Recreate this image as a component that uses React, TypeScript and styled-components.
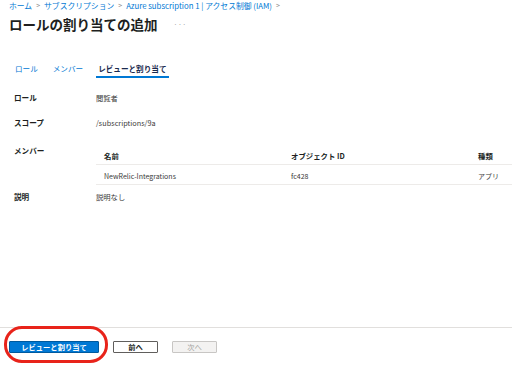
import React from "react";
import styled, { createGlobalStyle } from "styled-components";

const Global = createGlobalStyle`
  html, body { margin: 0; padding: 0; background: #ffffff; }
  body {
    font-family: "Noto Sans CJK JP", "Noto Sans", "Liberation Sans", sans-serif;
    color: #323130;
  }
  * { box-sizing: border-box; }
`;

const Page = styled.div`
  display: flex;
  flex-direction: column;
  height: 365px;
  width: 512px;
  overflow: hidden;
`;

const Main = styled.div`
  flex: 1;
  display: flex;
  flex-direction: column;
`;

const Breadcrumb = styled.nav`
  display: flex;
  align-items: center;
  padding-left: 9px;
  height: 11px;
  font-size: 7.8px;
  line-height: 11px;
  white-space: nowrap;
`;

const Crumb = styled.span`
  color: #0078d4;
`;

const Sep = styled.span`
  color: #8a8886;
  margin: 0 4px;
  font-size: 7px;
`;

const TitleRow = styled.div`
  display: flex;
  align-items: center;
  margin-top: 4px;
  padding-left: 9px;
  height: 18px;
`;

const Title = styled.h1`
  margin: 0;
  font-size: 13.5px;
  line-height: 18px;
  font-weight: 700;
  color: #201f1e;
  white-space: nowrap;
`;

const More = styled.span`
  margin-left: 16px;
  font-size: 7px;
  color: #a19f9d;
  letter-spacing: 0.5px;
`;

const Tabs = styled.div`
  display: flex;
  gap: 11px;
  margin-top: 30px;
  padding-left: 13px;
`;

const Tab = styled.div<{ $active?: boolean }>`
  padding: 0 2px 1px;
  font-size: 7.6px;
  line-height: 12px;
  white-space: nowrap;
  color: ${(p) => (p.$active ? "#1b2a4e" : "#0078d4")};
  font-weight: ${(p) => (p.$active ? 700 : 400)};
  border-bottom: 2px solid ${(p) => (p.$active ? "#0078d4" : "transparent")};
`;

const Details = styled.div`
  display: flex;
  flex-direction: column;
  margin-top: 14px;
`;

const Row = styled.div<{ $after: number }>`
  display: grid;
  grid-template-columns: 82px 1fr;
  padding-left: 14px;
  margin-bottom: ${(p) => p.$after}px;
`;

const Label = styled.div<{ $pad?: number }>`
  font-size: 7.6px;
  line-height: 12px;
  font-weight: 600;
  color: #201f1e;
  padding-top: ${(p) => p.$pad ?? 0}px;
  white-space: nowrap;
`;

const Value = styled.div`
  font-size: 7.3px;
  line-height: 12px;
  color: #3b3a39;
  white-space: nowrap;
`;

const Table = styled.div`
  width: 420px;
  display: flex;
  flex-direction: column;
`;

const TRow = styled.div<{ $head?: boolean }>`
  display: grid;
  grid-template-columns: 187px 187px 1fr;
  padding: ${(p) => (p.$head ? "8px 0 2px" : "5px 0 2px")};
  border-bottom: 1px solid #edebe9;
`;

const Cell = styled.div<{ $head?: boolean }>`
  padding-left: 8px;
  font-size: ${(p) => (p.$head ? "7.4px" : "7px")};
  line-height: 12px;
  font-weight: ${(p) => (p.$head ? 700 : 400)};
  color: ${(p) => (p.$head ? "#201f1e" : "#3b3a39")};
  white-space: nowrap;
  overflow: hidden;
`;

const Footer = styled.footer`
  border-top: 1px solid #e1dfdd;
  height: 38px;
  padding: 13px 0 0 9px;
  display: flex;
  gap: 14px;
  align-items: flex-start;
`;

const Highlight = styled.div`
  position: relative;
  display: flex;
`;

const Ring = styled.div`
  position: absolute;
  left: -5px;
  top: -15px;
  width: 104px;
  height: 37px;
  border: 3px solid #e8231a;
  border-radius: 18px;
  pointer-events: none;
`;

const Button = styled.button<{ $variant: "primary" | "default" | "disabled" }>`
  height: 12px;
  padding: 0;
  margin: 0;
  font-family: inherit;
  font-size: 7.3px;
  line-height: 10px;
  border-radius: 1px;
  width: ${(p) => (p.$variant === "primary" ? "90px" : "45px")};
  background: ${(p) =>
    p.$variant === "primary" ? "#0078d4" : p.$variant === "disabled" ? "#f3f2f1" : "#ffffff"};
  color: ${(p) =>
    p.$variant === "primary" ? "#ffffff" : p.$variant === "disabled" ? "#a19f9d" : "#201f1e"};
  border: 1px solid
    ${(p) =>
      p.$variant === "primary" ? "#005a9e" : p.$variant === "disabled" ? "#c8c6c4" : "#605e5c"};
  font-weight: ${(p) => (p.$variant === "disabled" ? 400 : 700)};
`;

export default function App() {
  return (
    <>
      <Global />
      <Page>
        <Main>
          <Breadcrumb>
            <Crumb>ホーム</Crumb>
            <Sep>&gt;</Sep>
            <Crumb>サブスクリプション</Crumb>
            <Sep>&gt;</Sep>
            <Crumb>Azure subscription 1 | アクセス制御 (IAM)</Crumb>
            <Sep>&gt;</Sep>
          </Breadcrumb>
          <TitleRow>
            <Title>ロールの割り当ての追加</Title>
            <More>···</More>
          </TitleRow>
          <Tabs>
            <Tab>ロール</Tab>
            <Tab>メンバー</Tab>
            <Tab $active>レビューと割り当て</Tab>
          </Tabs>
          <Details>
            <Row $after={13}>
              <Label>ロール</Label>
              <Value>閲覧者</Value>
            </Row>
            <Row $after={13}>
              <Label>スコープ</Label>
              <Value>/subscriptions/9a</Value>
            </Row>
            <Row $after={6}>
              <Label $pad={3}>メンバー</Label>
              <Table>
                <TRow $head>
                  <Cell $head>名前</Cell>
                  <Cell $head>オブジェクト ID</Cell>
                  <Cell $head>種類</Cell>
                </TRow>
                <TRow>
                  <Cell>NewRelic-Integrations</Cell>
                  <Cell>fc428</Cell>
                  <Cell>アプリ</Cell>
                </TRow>
              </Table>
            </Row>
            <Row $after={0}>
              <Label>説明</Label>
              <Value>説明なし</Value>
            </Row>
          </Details>
        </Main>
        <Footer>
          <Highlight>
            <Button $variant="primary">レビューと割り当て</Button>
            <Ring />
          </Highlight>
          <Button $variant="default">前へ</Button>
          <Button $variant="disabled" disabled>
            次へ
          </Button>
        </Footer>
      </Page>
    </>
  );
}
